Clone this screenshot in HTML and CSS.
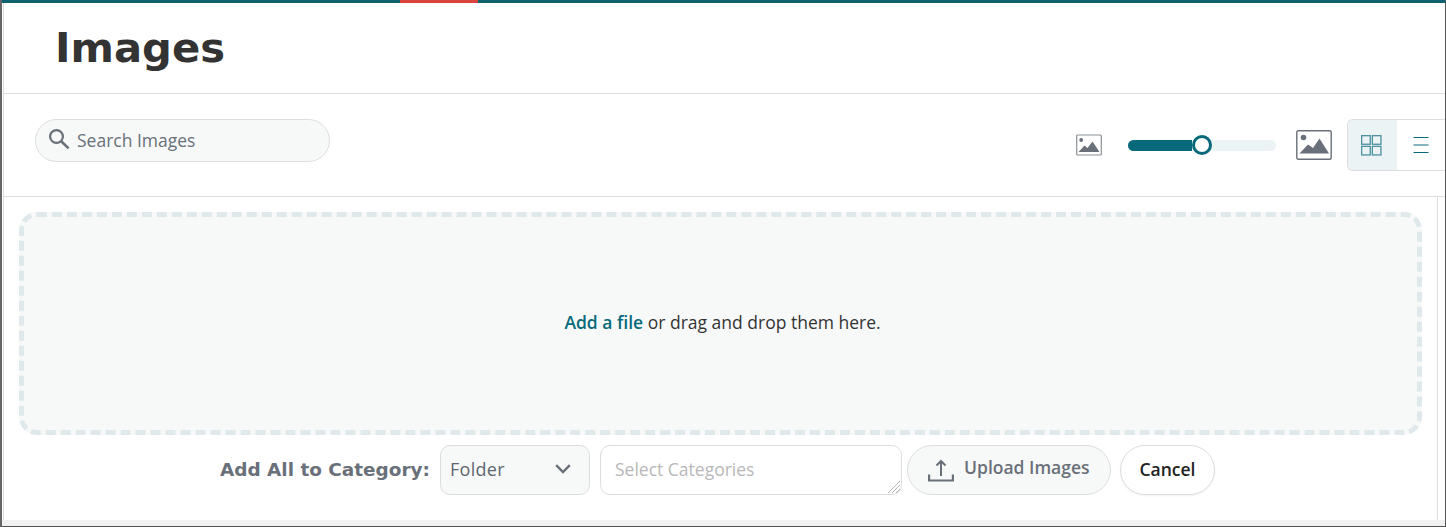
FILE: index.html
```html
<!DOCTYPE html>
<html lang="en">
  <head>
    <meta charset="UTF-8" />
    <meta name="viewport" content="width=device-width, initial-scale=1.0" />
    <title>Images</title>
    <link rel="stylesheet" href="styles.css">
  </head>
  <body>
    <div class="window">
      <div class="progress-bar"><span class="progress-mark"></span></div>
      <div class="page">
        <header class="page-header">
          <h1>Images</h1>
        </header>

        <div class="toolbar">
          <label class="search-box">
            <svg class="search-icon" width="22" height="22" viewBox="0 0 22 22" fill="none" stroke="#697079" stroke-width="2.2">
              <circle cx="8.5" cy="8.5" r="6.4" />
              <path d="M13.2 13.2 L20.6 20.4" stroke-width="2.6" />
            </svg>
            <span>Search Images</span>
          </label>

          <div class="view-controls">
            <svg class="thumb-icon" width="26" height="22" viewBox="0 0 26 22">
              <rect x="0.7" y="1" width="24.6" height="20" rx="1" fill="#fff" stroke="#8b9197" stroke-width="1.2" />
              <circle cx="5.2" cy="6" r="1.9" fill="#697079" />
              <path d="M2.5 18 L8.5 11.5 L11.5 14 L16.5 7.5 L23.5 18 Z" fill="#697079" />
            </svg>
            <div class="slider">
              <div class="slider-fill"></div>
              <div class="slider-knob"></div>
            </div>
            <svg class="thumb-icon-large" width="36" height="30" viewBox="0 0 36 30">
              <rect x="0.8" y="0.8" width="34.4" height="28.4" rx="1.5" fill="#fff" stroke="#697079" stroke-width="1.4" />
              <circle cx="7.5" cy="7.5" r="2.8" fill="#697079" />
              <path d="M3.5 23.5 L12 14.5 L17 18 L23.5 8.5 L33 23.5 Z" fill="#697079" />
            </svg>
            <div class="view-toggle">
              <button class="view-btn active">
                <svg class="grid-icon" width="21" height="21" viewBox="0 0 21 21" fill="none" stroke="#4c929f" stroke-width="1.3">
                  <rect x="0.65" y="0.65" width="8.6" height="8.6" />
                  <rect x="11.35" y="0.65" width="8.6" height="8.6" />
                  <rect x="0.65" y="11.35" width="8.6" height="8.6" />
                  <rect x="11.35" y="11.35" width="8.6" height="8.6" />
                </svg>
              </button>
              <button class="view-btn">
                <svg width="16" height="16" viewBox="0 0 16 16" stroke="#08697a" stroke-width="1">
                  <path d="M0.5 0.5 H15.5 M0.5 8 H15.5 M0.5 15.5 H15.5" />
                </svg>
              </button>
            </div>
          </div>
        </div>

        <div class="content">
          <div class="dropzone">
            <a href="#" class="add-link">Add a file</a>&nbsp;or drag and drop them here.
          </div>

          <div class="upload-row">
            <span class="category-label">Add All to Category:</span>
            <div class="folder-select">
              <span>Folder</span>
              <svg width="16" height="10" viewBox="0 0 16 10" fill="none" stroke="#697079" stroke-width="2.4">
                <path d="M1.2 1.2 L8 8 L14.8 1.2" />
              </svg>
            </div>
            <div class="category-field">
              <textarea class="category-input" placeholder="Select Categories"></textarea>
              <svg class="resize-grip" width="14" height="14" viewBox="0 0 14 14" stroke="#b5b5b5" stroke-width="1">
                <path d="M1 13 L13 1 M5 13 L13 5 M9 13 L13 9" />
              </svg>
            </div>
            <button class="upload-btn">
              <svg width="26" height="23" viewBox="0 0 26 23" fill="none" stroke="#697079" stroke-width="2.2">
                <path d="M1.1 15.5 V21.5 H24.9 V15.5" />
                <path d="M13 17 V2.5" stroke-width="2" />
                <path d="M8.5 6.5 L13 2 L17.5 6.5" stroke-width="2" />
              </svg>
              <span>Upload Images</span>
            </button>
            <button class="cancel-btn">Cancel</button>
          </div>
        </div>
      </div>
      <div class="bottom-strip"></div>
    </div>
  </body>
</html>
```

FILE: styles.css
```css
/* General Styling */
html,
body {
  margin: 0;
  padding: 0;
}
body {
  font-family: "Open Sans", sans-serif;
  color: #333;
  background-color: #fff;
}
.window {
  width: 1446px;
  height: 527px;
  box-sizing: border-box;
  display: flex;
  flex-direction: column;
  overflow: hidden;
  border-left: 2px solid #666;
  border-right: 1px solid #555;
  border-bottom: 1px solid #555;
}
.progress-bar {
  height: 3px;
  flex: none;
  background-color: #0e6170;
  padding-left: 398px;
}
.progress-mark {
  display: block;
  width: 78px;
  height: 3px;
  background-color: #d9443d;
}
.page {
  flex: 1;
  min-height: 0;
  margin-left: 1px;
  border-left: 1px solid #ddd;
  display: flex;
  flex-direction: column;
}
.page-header {
  height: 91px;
  flex: none;
  box-sizing: border-box;
  border-bottom: 1px solid #ddd;
  padding-left: 51px;
}
h1 {
  margin: 0;
  font-family: "DejaVu Sans", sans-serif;
  font-size: 41.7px;
  line-height: 90px;
  font-weight: 700;
  color: #333;
}
.toolbar {
  height: 103px;
  flex: none;
  box-sizing: border-box;
  border-bottom: 1px solid #ddd;
  padding: 25px 0 0 31px;
  display: flex;
  justify-content: space-between;
  align-items: flex-start;
}
.search-box {
  width: 295px;
  height: 43px;
  box-sizing: border-box;
  border: 1px solid #ddd;
  border-radius: 22px;
  background-color: #f7f9f9;
  display: flex;
  align-items: center;
  gap: 7px;
  padding-left: 12px;
  font-size: 17.5px;
  color: #697079;
}
.search-icon {
  margin-top: -3px;
}
.search-box span {
  margin-top: -2px;
}
.view-controls {
  display: flex;
  align-items: center;
  height: 52px;
}
.thumb-icon {
  margin-right: 26px;
}
.slider {
  width: 148px;
  height: 11px;
  border-radius: 6px;
  background-color: #ecf3f5;
  display: flex;
  align-items: center;
  margin-right: 20px;
}
.slider-fill {
  width: 64px;
  height: 11px;
  border-radius: 6px 0 0 6px;
  background-color: #08697a;
}
.slider-knob {
  width: 20px;
  height: 20px;
  box-sizing: border-box;
  border: 3px solid #08697a;
  border-radius: 50%;
  background-color: #fff;
  flex: none;
  margin-top: -1px;
}
.view-toggle {
  margin-left: 15px;
  width: 98px;
  height: 52px;
  box-sizing: border-box;
  border: 1px solid #ddd;
  border-right: 0;
  border-radius: 6px 0 0 6px;
  display: flex;
  flex: none;
  overflow: hidden;
}
.view-btn {
  width: 47px;
  height: 50px;
  border: 0;
  padding: 0;
  background-color: #fff;
  display: flex;
  align-items: center;
  justify-content: center;
}
.view-btn.active {
  width: 49px;
  background-color: #ecf3f5;
}
.grid-icon {
  margin-right: 2px;
}
.content {
  flex: 1;
  min-height: 0;
  margin-right: 7px;
  border-right: 1px solid #ddd;
  padding: 15px 15px 0 15px;
}
.dropzone {
  height: 223px;
  box-sizing: border-box;
  border: 5px dashed #dfe9ec;
  border-radius: 18px;
  background-color: #f7f9f9;
  display: flex;
  align-items: center;
  justify-content: center;
  padding: 0 0 3px 4px;
  font-size: 17.5px;
  color: #333;
}
.add-link {
  color: #08697a;
  font-weight: 600;
  text-decoration: none;
}
.upload-row {
  margin-top: 10px;
  display: flex;
  align-items: flex-start;
  padding-left: 201px;
}
.category-label {
  font-family: "DejaVu Sans", sans-serif;
  font-size: 18.45px;
  font-weight: 700;
  color: #697079;
  line-height: 50px;
  width: 220px;
  white-space: nowrap;
}
.folder-select {
  width: 150px;
  height: 50px;
  box-sizing: border-box;
  border: 1px solid #ddd;
  border-radius: 10px;
  background-color: #f7f9f9;
  display: flex;
  align-items: center;
  justify-content: space-between;
  padding: 0 18px 2px 9px;
  font-size: 18px;
  letter-spacing: 0.3px;
  color: #5f666e;
  margin-right: 10px;
}
.category-field {
  position: relative;
  width: 302px;
  height: 50px;
  margin-right: 5px;
}
.category-input {
  display: block;
  width: 100%;
  height: 100%;
  box-sizing: border-box;
  border: 1px solid #ddd;
  border-radius: 10px;
  padding: 11px 14px;
  font-family: "Open Sans", sans-serif;
  font-size: 17.5px;
  margin: 0;
  outline: none;
  resize: none;
}
.category-input::placeholder {
  color: #b8b8b8;
}
.resize-grip {
  position: absolute;
  right: 1px;
  bottom: 1px;
}
.upload-btn {
  width: 204px;
  height: 50px;
  border: 1px solid #ddd;
  border-radius: 25px;
  background-color: #f7f9f9;
  color: #697079;
  font-family: "Open Sans", sans-serif;
  font-size: 17.5px;
  font-weight: 600;
  display: flex;
  align-items: center;
  gap: 10px;
  padding: 0 0 0 20px;
  margin-right: 9px;
}
.upload-btn span {
  margin-top: -7px;
}
.cancel-btn {
  width: 95px;
  height: 50px;
  border: 1px solid #ddd;
  border-radius: 25px;
  background-color: #fff;
  color: #222;
  font-family: "Open Sans", sans-serif;
  font-size: 17.5px;
  font-weight: 600;
  padding: 0 0 2px;
  box-shadow: 0 1px 2px rgba(0, 0, 0, 0.05);
}
.bottom-strip {
  height: 6px;
  flex: none;
  background-color: #f1f1f1;
}
```
